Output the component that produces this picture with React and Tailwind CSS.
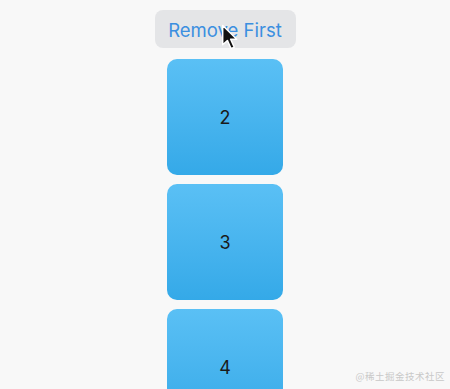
import React, { useState } from "react";

export default function App() {
  const [items, setItems] = useState([2, 3, 4]);

  return (
    <div
      className="relative w-[450px] h-[389px] overflow-hidden bg-[#f8f8f8]"
      style={{ fontFamily: "Inter, 'Liberation Sans', sans-serif" }}
    >
      <div className="flex flex-col items-center pt-[10px]">
        <button
          onClick={() => setItems(items.slice(1))}
          className="w-[141px] h-[38px] pt-[3px] rounded-lg bg-[#e4e5e7] text-[18.5px] text-[#3b8fe0] leading-none"
        >
          Remove First
        </button>

        <div className="flex flex-col gap-[9px] mt-[11px]">
          {items.map((n) => (
            <div
              key={n}
              className="w-[116px] h-[116px] rounded-[10px] bg-gradient-to-b from-[#5ac0f5] to-[#34a9e8] flex items-center justify-center text-[18px] text-[#1a1a1a]"
            >
              {n}
            </div>
          ))}
        </div>
      </div>

      {/* mouse pointer */}
      <svg
        className="absolute left-[221px] top-[24px]"
        width="19"
        height="27"
        viewBox="0 0 18 26"
      >
        <path
          d="M1.5 1.5 L1.5 20 L6 15.8 L9.6 23.8 L12.6 22.4 L9.1 14.6 L15 14.6 Z"
          fill="#111"
          stroke="#fff"
          strokeWidth="1.4"
          strokeLinejoin="round"
        />
      </svg>

      <div
        className="absolute right-[5px] bottom-[6px] text-[9.5px] text-[#c8c8c8] tracking-[0.5px]"
        style={{ fontFamily: "'Noto Sans CJK SC', sans-serif" }}
      >
        @稀土掘金技术社区
      </div>
    </div>
  );
}
